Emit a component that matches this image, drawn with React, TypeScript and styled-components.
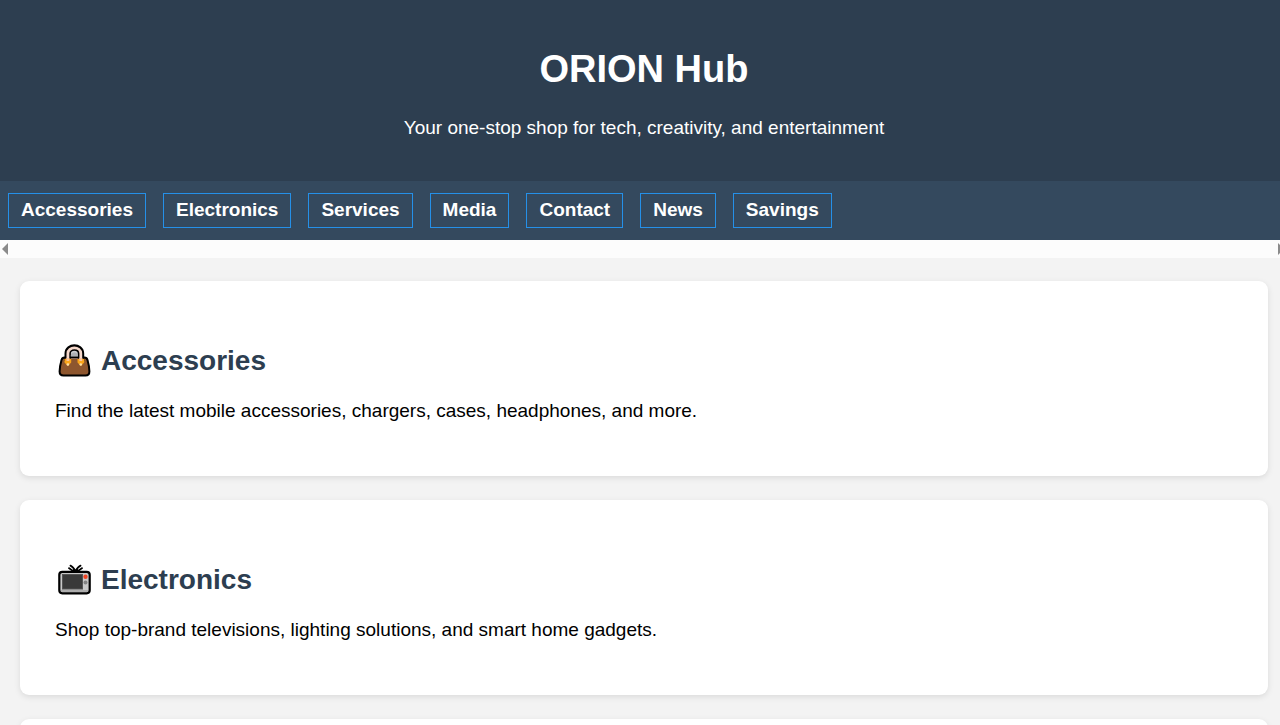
import React from 'react';
import styled, { createGlobalStyle } from 'styled-components';

const GlobalStyle = createGlobalStyle`
  * { box-sizing: border-box; }
  html { overflow: hidden; background: #f3f3f3; }
  body {
    margin: 0;
    font-family: "Liberation Sans", Arial, sans-serif;
    font-size: 19px;
    line-height: 22px;
    color: #000;
  }
`;

const Page = styled.div`
  margin-right: -8px;
  height: 100vh;
  overflow: hidden;
`;

const Header = styled.header`
  display: flex;
  flex-direction: column;
  align-items: center;
  gap: 26px;
  padding: 47px 24px 42px;
  background: #2d3e50;
  color: #fff;
`;

const Title = styled.h1`
  margin: 0;
  font-size: 38px;
  line-height: 44px;
`;

const Text = styled.p`
  margin: 0;
`;

const Nav = styled.nav`
  display: flex;
  gap: 17px;
  padding: 12px 8px;
  background: #34495e;
`;

const NavLink = styled.a`
  flex: none;
  padding: 5px 12px 6px;
  border: 1px solid #2590e8;
  color: #fff;
  font-weight: bold;
  text-decoration: none;
`;

const ScrollTrack = styled.div`
  display: flex;
  align-items: center;
  justify-content: space-between;
  height: 18px;
  padding: 0 2px;
  background: #fcfcfc;
`;

const Arrow = styled.svg`
  display: block;
  width: 8px;
  height: 12px;
  fill: #8b8b8b;
`;

const Main = styled.main`
  display: flex;
  flex-direction: column;
  gap: 24px;
  padding: 23px 20px;
`;

const Card = styled.section`
  flex: none;
  display: flex;
  flex-direction: column;
  gap: 23px;
  padding: 63px 35px 54px;
  border-radius: 9px;
  background: #fff;
  box-shadow: 0 2px 6px rgba(0, 0, 0, 0.1);
`;

const CardTitle = styled.h2`
  display: flex;
  align-items: center;
  gap: 8px;
  margin: 0;
  color: #2d3e50;
  font-size: 28px;
  line-height: 33px;
`;

const Icon = styled.svg`
  display: block;
  flex: none;
  width: 38px;
  height: 33px;
`;

const HandbagIcon = () => (
  <Icon viewBox="0 0 38 33" aria-hidden="true">
    <path d="M9.500 13.500h20c1.500 0 2.500.7 3 2.500 1 3.500 1.900 8 1.900 11.500 0 2.700-1.300 4-3.900 4h-22c-2.600 0-3.900-1.300-3.900-4 0-3.500.9-8 1.900-11.500.5-1.800 1.500-2.500 3-2.500Z" fill="#8e562e" stroke="#000" strokeWidth="2" />
    <path d="M12.700 17V9.500c0-8 13.300-8 13.300 0V17" fill="#c9cccf" stroke="#000" strokeWidth="6.400" />
    <path d="M15.800 13.500v-2c0-4 7-4 7 0v2Z" fill="#aeb1b4" />
    <path d="M14.500 13.500h9.600" stroke="#000" strokeWidth="1.800" />
    <path d="M10 14.500h18.500V22H10Z" fill="#8e562e" />
    <path d="M12.900 19V9.500c0-7.500 12.900-7.500 12.900 0V19" fill="none" stroke="#f6d8cb" strokeWidth="2.800" strokeLinecap="round" />
    <path d="M9.500 15h6.700v3.500l-3.300 3.500-3.400-3.500Zm13 0h6.700v3.500L25.800 22l-3.300-3.500Z" fill="#faa51a" />
    <path d="M11.500 14h2.800v3h-2.800Zm12.900 0h2.800v3h-2.800Z" fill="#fac49a" />
    <circle cx="12.900" cy="20.500" r="1.300" fill="#ffe0a5" />
    <circle cx="25.800" cy="20.500" r="1.300" fill="#ffe0a5" />
  </Icon>
);

const TelevisionIcon = () => (
  <Icon viewBox="0 0 38 33" aria-hidden="true">
    <path d="M20.500 8.500c-1.500-3-3.200-5-5-5.800M20.500 8.500c1.500-3 3.200-5 5-5.800M20.500 8.500c-2.500-.5-4.700-1.500-6.500-3.300M20.500 8.500c2.500-.5 4.700-1.500 6.500-3.300" fill="none" stroke="#000" strokeWidth="1.900" strokeLinecap="round" />
    <rect x="4.300" y="8.800" width="30.400" height="21.500" rx="3" fill="#c8c8c8" stroke="#000" strokeWidth="2.200" />
    <path d="M6 28h27" stroke="#adadad" strokeWidth="2" />
    <rect x="7.500" y="11.500" width="20" height="14.500" fill="#393939" stroke="#555" />
    <circle cx="30.500" cy="13.700" r="2.200" fill="#f04423" />
    <circle cx="30.500" cy="19.500" r="2" fill="#828282" />
  </Icon>
);

const links = ['Accessories', 'Electronics', 'Services', 'Media', 'Contact', 'News', 'Savings'];

export default function App() {
  return (
    <>
      <GlobalStyle />
      <Page>
        <Header>
          <Title>ORION Hub</Title>
          <Text>Your one-stop shop for tech, creativity, and entertainment</Text>
        </Header>
        <Nav>
          {links.map((label) => (
            <NavLink key={label} href={`#${label.toLowerCase()}`}>{label}</NavLink>
          ))}
        </Nav>
        <ScrollTrack aria-hidden="true">
          <Arrow viewBox="0 0 8 12"><path d="M6 0v12L0 6Z" /></Arrow>
          <Arrow viewBox="0 0 8 12"><path d="M0 0v12l6-6Z" /></Arrow>
        </ScrollTrack>
        <Main>
          <Card id="accessories">
            <CardTitle><HandbagIcon />Accessories</CardTitle>
            <Text>Find the latest mobile accessories, chargers, cases, headphones, and more.</Text>
          </Card>
          <Card id="electronics">
            <CardTitle><TelevisionIcon />Electronics</CardTitle>
            <Text>Shop top-brand televisions, lighting solutions, and smart home gadgets.</Text>
          </Card>
          <Card id="services" />
        </Main>
      </Page>
    </>
  );
}
